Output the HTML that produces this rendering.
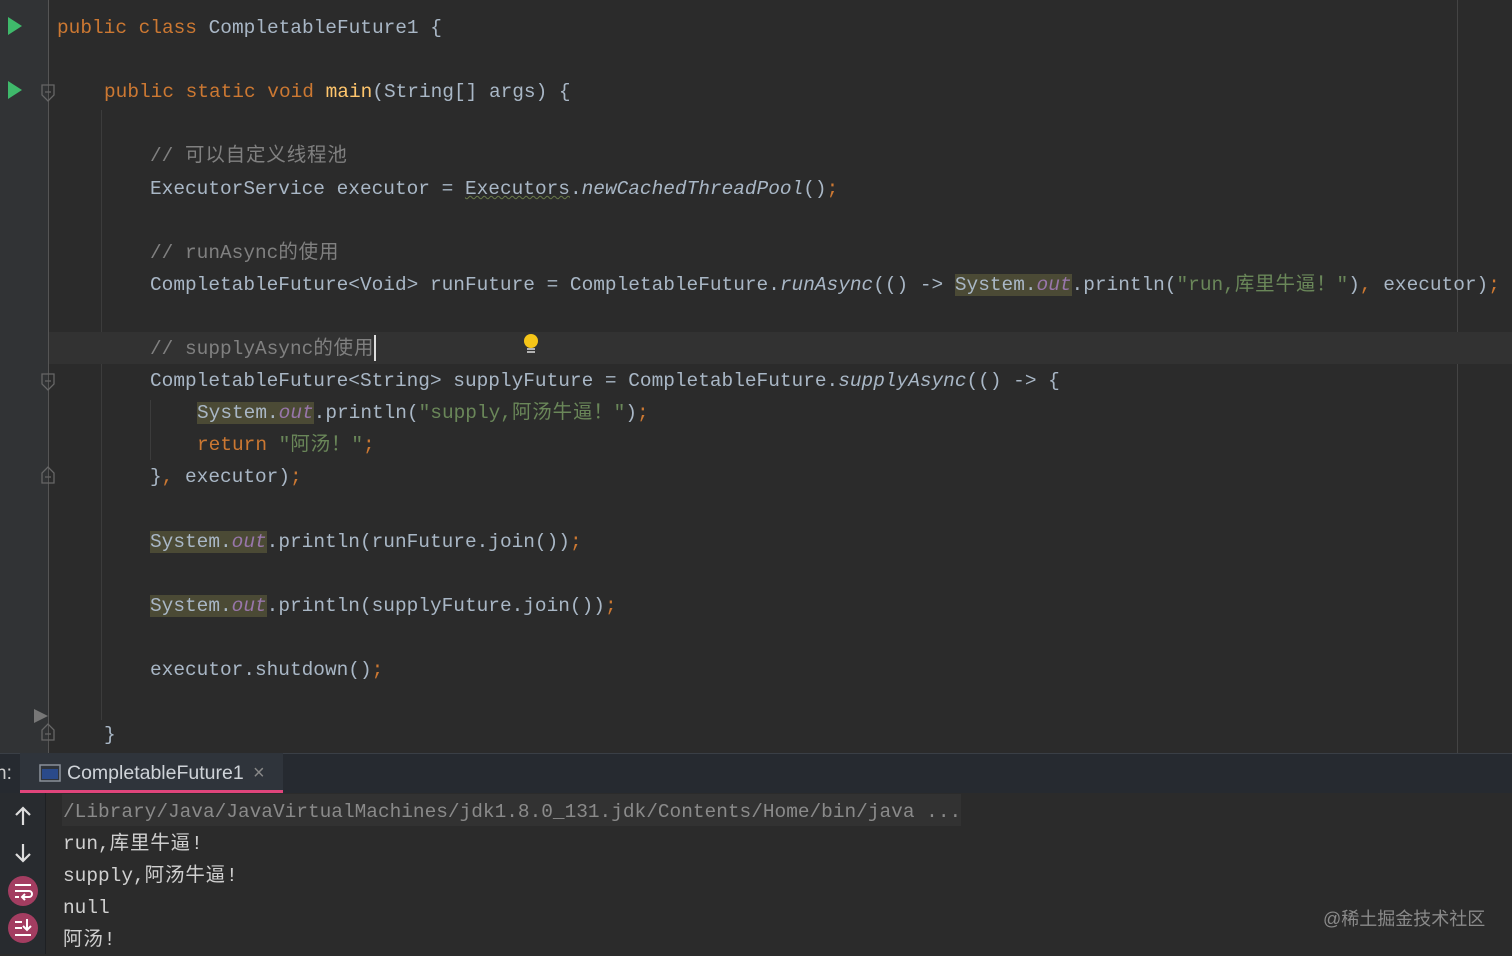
<!DOCTYPE html>
<html><head><meta charset="utf-8"><style>
*{margin:0;padding:0;box-sizing:border-box}
body{width:1512px;height:954px;overflow:hidden;background:#2b2b2b;position:relative;font-family:"Liberation Mono","Noto Sans CJK SC",monospace;font-size:19.45px;color:#a9b7c6}
.l{position:absolute;height:32px;line-height:32px;white-space:pre;overflow:visible;margin-top:2px}
.l span{line-height:32px;vertical-align:top}
.k{color:#cc7832}.m{color:#ffc66d}.c{color:#808080}.s{color:#6a8759}
.o{color:#9876aa;font-style:italic}.i{font-style:italic}
.h{background:#4b4a35}
.z{letter-spacing:0.9px}
.u{text-decoration:underline wavy #6a7a4a;text-decoration-thickness:1px}
.abs{position:absolute}
</style></head><body>
<div class="abs" style="left:0;top:0;width:48px;height:753px;background:#313335"></div>
<div class="abs" style="left:48px;top:0;width:1px;height:753px;background:#555"></div>
<div class="abs" style="left:101px;top:110px;width:1px;height:610px;background:#3c3c3c"></div>
<div class="abs" style="left:150px;top:400px;width:1px;height:60px;background:#3c3c3c"></div>
<div class="abs" style="left:1457px;top:0;width:1px;height:753px;background:#444"></div>
<div class="abs" style="left:49px;top:332px;width:1463px;height:32px;background:#323232"></div>
<svg class="abs" style="left:8px;top:17px" width="14" height="18"><polygon points="0,0 14,9 0,18" fill="#3fb96b"/></svg>
<svg class="abs" style="left:8px;top:81px" width="14" height="18"><polygon points="0,0 14,9 0,18" fill="#3fb96b"/></svg>
<svg class="abs" style="left:40px;top:83px" width="16" height="20"><path d="M2 2H14V12L8 18L2 12Z M5 9H11" fill="none" stroke="#666" stroke-width="1.3"/></svg>
<svg class="abs" style="left:40px;top:372px" width="16" height="20"><path d="M2 2H14V12L8 18L2 12Z M5 9H11" fill="none" stroke="#666" stroke-width="1.3"/></svg>
<svg class="abs" style="left:40px;top:465px" width="16" height="20"><path d="M2 18H14V8L8 2L2 8Z M5 12H11" fill="none" stroke="#666" stroke-width="1.3"/></svg>
<svg class="abs" style="left:40px;top:722px" width="16" height="20"><path d="M2 18H14V8L8 2L2 8Z M5 12H11" fill="none" stroke="#666" stroke-width="1.3"/></svg>
<svg class="abs" style="left:34px;top:709px" width="14" height="14"><polygon points="0,0 14,7 0,14" fill="#777"/></svg>
<svg class="abs" style="left:521px;top:332px" width="20" height="24"><circle cx="10" cy="9" r="7" fill="#f5c518"/><path d="M6 17H14M6 20H14" stroke="#ddd" stroke-width="1.5"/></svg>

<div class="l" style="left:57px;top:10px"><span class="k">public class </span>CompletableFuture1 {</div>
<div class="l" style="left:104px;top:74px"><span class="k">public static void </span><span class="m">main</span>(String[] args) {</div>
<div class="l c" style="left:150px;top:138px">// <span class="z">可以自定义线程池</span></div>
<div class="l" style="left:150px;top:171px">ExecutorService executor = <span class="u">Executors</span>.<span class="i">newCachedThreadPool</span>()<span class="k">;</span></div>
<div class="l c" style="left:150px;top:235px">// runAsync<span class="z">的使用</span></div>
<div class="l" style="left:150px;top:267px">CompletableFuture&lt;Void&gt; runFuture = CompletableFuture.<span class="i">runAsync</span>(() -&gt; <span class="h">System.<span class="o">out</span></span>.println(<span class="s">"run,<span class="z">库里牛逼！</span>"</span>)<span class="k">, </span>executor)<span class="k">;</span></div>
<div class="l c" style="left:150px;top:331px">// supplyAsync<span class="z">的使用</span></div>
<div class="abs" style="left:374px;top:335px;width:2px;height:26px;background:#ddd"></div>
<div class="l" style="left:150px;top:363px">CompletableFuture&lt;String&gt; supplyFuture = CompletableFuture.<span class="i">supplyAsync</span>(() -&gt; {</div>
<div class="l" style="left:197px;top:395px"><span class="h">System.<span class="o">out</span></span>.println(<span class="s">"supply,<span class="z">阿汤牛逼！</span>"</span>)<span class="k">;</span></div>
<div class="l" style="left:197px;top:427px"><span class="k">return </span><span class="s">"<span class="z">阿汤！</span>"</span><span class="k">;</span></div>
<div class="l" style="left:150px;top:459px">}<span class="k">, </span>executor)<span class="k">;</span></div>
<div class="l" style="left:150px;top:524px"><span class="h">System.<span class="o">out</span></span>.println(runFuture.join())<span class="k">;</span></div>
<div class="l" style="left:150px;top:588px"><span class="h">System.<span class="o">out</span></span>.println(supplyFuture.join())<span class="k">;</span></div>
<div class="l" style="left:150px;top:652px">executor.shutdown()<span class="k">;</span></div>
<div class="l" style="left:104px;top:717px">}</div>

<div class="abs" style="left:0;top:753px;width:1512px;height:40px;background:#262a30;border-top:1px solid #3a3f46"></div>
<div class="abs" style="left:20px;top:753px;width:263px;height:40px;background:#2f343b;border-bottom:3px solid #e0457b"></div>
<div class="abs" style="left:-4px;top:763px;font-family:'Liberation Sans',sans-serif;font-size:19px;color:#ccc">n:</div>
<svg class="abs" style="left:39px;top:764px" width="22" height="18"><rect x="1" y="1" width="20" height="16" fill="none" stroke="#8a9099" stroke-width="1.5"/><rect x="3" y="5" width="16" height="10" fill="#2a4a8a"/></svg>
<div class="abs" style="left:67px;top:762px;font-family:'Liberation Sans',sans-serif;font-size:19.5px;color:#cfd3d8">CompletableFuture1</div>
<div class="abs" style="left:253px;top:762px;font-family:'Liberation Sans',sans-serif;font-size:20px;color:#888">×</div>
<div class="abs" style="left:0;top:793px;width:45px;height:161px;background:#282b2f"></div>
<div class="abs" style="left:45px;top:793px;width:1px;height:161px;background:#1e2023"></div>
<svg class="abs" style="left:13px;top:805px" width="20" height="22"><path d="M10 20V3M3 10L10 3L17 10" fill="none" stroke="#ddd" stroke-width="2.2"/></svg>
<svg class="abs" style="left:13px;top:842px" width="20" height="22"><path d="M10 2V19M3 12L10 19L17 12" fill="none" stroke="#ddd" stroke-width="2.2"/></svg>
<svg class="abs" style="left:7px;top:875px" width="32" height="32"><circle cx="16" cy="16" r="15" fill="#a33d61"/><path d="M8 10H24M8 16H22a3 3 0 0 1 0 6H16M18 19l-3 3 3 3M8 22H12" fill="none" stroke="#fff" stroke-width="2"/></svg>
<svg class="abs" style="left:7px;top:912px" width="32" height="32"><circle cx="16" cy="16" r="15" fill="#a33d61"/><path d="M8 10H15M8 16H15M8 23H24M20 7V18M16 14l4 4 4-4" fill="none" stroke="#fff" stroke-width="2"/></svg>
<div class="abs" style="left:62px;top:794px;width:899px;height:32px;background:#323232"></div>
<div class="l" style="left:63px;top:794px;color:#8a8a8a">/Library/Java/JavaVirtualMachines/jdk1.8.0_131.jdk/Contents/Home/bin/java ...</div>
<div class="l" style="left:63px;top:826px;color:#d0d0d0">run,<span class="z">库里牛逼</span>!</div>
<div class="l" style="left:63px;top:858px;color:#d0d0d0">supply,<span class="z">阿汤牛逼</span>!</div>
<div class="l" style="left:63px;top:890px;color:#d0d0d0">null</div>
<div class="l" style="left:63px;top:922px;color:#d0d0d0"><span class="z">阿汤</span>!</div>
<div class="abs" style="left:1323px;top:905px;font-family:'Liberation Sans','Noto Sans CJK SC',sans-serif;font-size:18px;color:#8a8a8a">@稀土掘金技术社区</div>
</body></html>
